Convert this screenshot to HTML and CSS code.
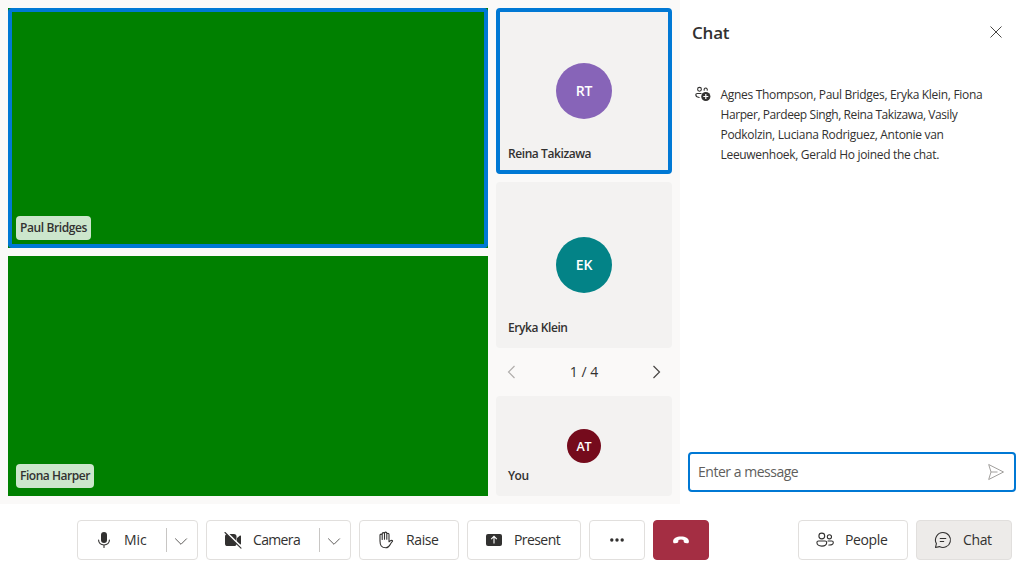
FILE: index.html
```html
<!DOCTYPE html>
<html lang="en">
<head>
<meta charset="utf-8">
<title>Call</title>
<link rel="stylesheet" href="styles.css">
</head>
<body>
<div class="app">
  <div class="main">
    <section class="stage">
      <div class="videos">
        <div class="video speaking"><span class="label">Paul Bridges</span></div>
        <div class="video"><span class="label label-wide">Fiona Harper</span></div>
      </div>
      <div class="side">
        <div class="tile speaking"><div class="avatar purple">RT</div><span class="name">Reina Takizawa</span></div>
        <div class="tile"><div class="avatar teal">EK</div><span class="name">Eryka Klein</span></div>
        <nav class="pager">
          <svg class="prev" width="16" height="16" viewBox="0 0 16 16"><path d="M10.5 2 4.5 8l6 6"/></svg>
          <span>1 / 4</span>
          <svg width="16" height="16" viewBox="0 0 16 16"><path d="m5.5 2 6 6-6 6"/></svg>
        </nav>
        <div class="tile you"><div class="avatar small">AT</div><span class="name">You</span></div>
      </div>
    </section>
    <aside class="chat">
      <header class="chat-head"><h2>Chat</h2>
        <svg class="close" width="16" height="16" viewBox="0 0 16 16"><path d="m2.5 2.5 11 11M13.5 2.5l-11 11"/></svg>
      </header>
      <div class="event">
        <svg width="16" height="16" viewBox="0 0 16 16"><g class="line"><circle cx="4.5" cy="3.3" r="1.9"/><path d="M9.2 4.2a1.6 1.6 0 1 1 3 0M6 7.5H2.3c-1 0-1.5.5-1.5 1.3 0 1.5 1.4 2.4 3.4 2.7"/></g><circle class="solid" cx="10.8" cy="10.5" r="4.6"/><path class="plus" d="M10.8 8v5M8.3 10.5h5"/></svg>
        <p>Agnes Thompson, Paul Bridges, Eryka Klein, Fiona<br><span class="tight">Harper, Pardeep Singh, Reina Takizawa, Vasily</span><br>Podkolzin, Luciana Rodriguez, Antonie van<br>Leeuwenhoek, Gerald Ho joined the chat.</p>
      </div>
      <div class="composer"><span>Enter a message</span>
        <svg width="18" height="18" viewBox="0 0 18 18"><path d="m1.7 1.5 14.8 7.5-14.8 7.5L4 9ZM4 9h6.5"/></svg>
      </div>
    </aside>
  </div>
  <footer class="bar">
    <div class="group">
      <div class="btn mic">
        <svg width="20" height="20" viewBox="0 0 20 20"><rect class="solid" x="7" y="2" width="6" height="11" rx="3"/><path class="line" d="M4.6 10c0 3.2 2.2 5 5.4 5s5.4-1.8 5.4-5M10 15v2.5"/></svg>
        <span>Mic</span><i class="split"></i>
        <svg class="chev" width="14" height="14" viewBox="0 0 14 14"><path d="m1.2 4.5 5.8 5.8 5.8-5.8"/></svg>
      </div>
      <div class="btn camera">
        <svg width="20" height="20" viewBox="0 0 20 20"><rect class="solid" x="2" y="4" width="11.5" height="12" rx="2.6"/><path class="solid" d="m14 8 3-2.4c.5-.4 1-.1 1 .5v7.8c0 .6-.5.9-1 .5L14 12Z"/><path class="gap" d="m3 2 15.5 15.3"/><path class="line" d="m2 2.5 16 15.7"/></svg>
        <span>Camera</span><i class="split"></i>
        <svg class="chev" width="14" height="14" viewBox="0 0 14 14"><path d="m1.2 4.5 5.8 5.8 5.8-5.8"/></svg>
      </div>
      <div class="btn raise">
        <svg width="20" height="20" viewBox="0 0 20 20"><path class="line" d="M4 11V5.2c0-1.5 2.2-1.5 2.2 0V9.5M6.2 5V3.7c0-1.5 2.3-1.5 2.3 0v5.5M8.5 4V3.2c0-1.5 2.3-1.5 2.3 0v6M10.8 4.4c0-1.5 2.2-1.5 2.2 0V11.8c1-1 2.4-1.7 3.2-1.3.7.4.3 1-.2 1.4-1.9 1.6-2.4 5.9-6.1 5.9C5.4 17.8 4 15.2 4 11"/></svg>
        <span>Raise</span>
      </div>
      <div class="btn present">
        <svg width="20" height="20" viewBox="0 0 20 20"><rect class="solid" x="2" y="4" width="16" height="12" rx="2"/><path class="arrow" d="M10 13.5v-7M7.2 9.2 10 6.4l2.8 2.8"/></svg>
        <span>Present</span>
      </div>
      <div class="btn more">
        <svg width="20" height="20" viewBox="0 0 20 20"><g class="solid"><circle cx="4.8" cy="10" r="1.7"/><circle cx="10" cy="10" r="1.7"/><circle cx="15.2" cy="10" r="1.7"/></g></svg>
      </div>
      <div class="btn leave">
        <svg width="20" height="20" viewBox="0 0 20 20"><path d="M10 6.4c4.6 0 7.8 1.9 7.9 4.6.1 1.8-.6 2.5-2 2.2l-1.8-.3c-.9-.2-1.3-.7-1.4-1.5l-.2-1.4c-1.5-.7-3.5-.7-5 0l-.2 1.4c-.1.8-.5 1.3-1.4 1.5l-1.8.3c-1.4.3-2.1-.4-2-2.2.1-2.7 3.3-4.6 7.9-4.6Z"/></svg>
      </div>
    </div>
    <div class="group">
      <div class="btn people">
        <svg width="20" height="20" viewBox="0 0 20 20"><g class="line"><circle cx="6.8" cy="6" r="2.9"/><circle cx="14.4" cy="6.8" r="2.1"/><path d="M3.5 11h6.6c1 0 1.6.6 1.6 1.5 0 2.2-2 3.6-4.9 3.6s-4.9-1.4-4.9-3.6c0-.9.6-1.5 1.6-1.5ZM13 11h3.8c1 0 1.5.6 1.5 1.4 0 1.8-1.7 2.9-4.5 2.6"/></g></svg>
        <span>People</span>
      </div>
      <div class="btn active">
        <svg width="20" height="20" viewBox="0 0 20 20"><path class="line" d="M10 2.5a7.5 7.5 0 1 1-3.6 14.1L2.5 17.5l.9-3.9A7.5 7.5 0 0 1 10 2.5ZM7.2 8.5h5.6M7.2 11.5h3.5"/></svg>
        <span>Chat</span>
      </div>
    </div>
  </footer>
</div>
</body>
</html>
```
FILE: styles.css
```css
* { box-sizing: border-box; }
body { margin: 0; font-family: "Segoe UI", "Open Sans", sans-serif; font-size: 14px; color: #323130; background: #fff; }
svg { display: block; flex: none; fill: none; stroke: #323130; }
.app { width: 1024px; height: 576px; display: flex; flex-direction: column; }
.main { height: 504px; display: flex; }
.stage { width: 680px; padding: 8px; display: flex; gap: 8px; background: #faf9f8; }
.videos { width: 480px; display: flex; flex-direction: column; gap: 8px; }
.video { position: relative; height: 240px; padding: 8px; display: flex; align-items: flex-end; background: #008000; }
.video.speaking::after { content: ""; position: absolute; inset: 0; border: 4px solid #0078d4; border-radius: 4px; }
.label { width: 75px; height: 24px; line-height: 24px; border-radius: 4px; text-align: center; background: rgba(255, 255, 255, .8); font-size: 12px; font-weight: 600; letter-spacing: -.38px; white-space: nowrap; }
.label-wide { width: 78px; letter-spacing: -.46px; }
.side { width: 176px; display: flex; flex-direction: column; }
.tile { height: 166px; padding: 55px 12px 0; border-radius: 4px; background: #f3f2f1; display: flex; flex-direction: column; }
.tile.speaking { border: 4px solid #0078d4; padding: 51px 8px 0; margin-bottom: 8px; }
.avatar { width: 56px; height: 56px; padding-bottom: 2px; border-radius: 50%; align-self: center; display: flex; align-items: center; justify-content: center; color: #fff; font-weight: 600; font-size: 14px; letter-spacing: -.1px; }
.purple { background: #8764b8; }
.teal { background: #038387; }
.small { width: 34px; height: 34px; padding: 0; font-size: 12.5px; background: #750b1c; }
.name { margin-top: 27px; line-height: 16px; font-size: 12px; font-weight: 600; letter-spacing: -.52px; }
.tile:not(.you) .name { letter-spacing: -.42px; }
.pager { height: 48px; padding: 0 8px; display: flex; align-items: center; justify-content: space-between; }
.pager span { padding-bottom: 2px; }
.pager svg { stroke: #484644; stroke-width: 1.2; }
.pager .prev { stroke: #b0aeac; }
.you { height: 100px; padding-top: 33px; }
.you .name { margin-top: 5px; }
.chat { width: 344px; display: flex; flex-direction: column; }
.chat-head { height: 64px; padding: 0 20px 0 12px; display: flex; align-items: center; justify-content: space-between; }
.close { stroke: #484644; }
h2 { margin: 0; font-size: 17px; font-weight: 600; letter-spacing: -.2px; }
.event { padding: 21px 0 0 15px; display: flex; gap: 9.5px; }
.event svg { margin-top: 1px; }
.event p { margin: 0; font-size: 12px; line-height: 20px; letter-spacing: -.31px; white-space: nowrap; }
.tight { letter-spacing: -.42px; }
.line { stroke: #323130; stroke-width: 1.1; stroke-linejoin: round; stroke-linecap: round; }
.solid { fill: #323130; stroke: none; }
.plus { stroke: #fff; stroke-width: 1.2; }
.composer { height: 40px; margin: auto 8px 12px; padding: 0 9px 0 8px; border: 2px solid #0078d4; border-radius: 4px; display: flex; align-items: center; justify-content: space-between; color: #605e5c; letter-spacing: -.48px; }
.composer span { padding-bottom: 2px; }
.composer svg { stroke: #a19f9d; stroke-linejoin: round; }
.bar { height: 72px; padding: 16px 12px 16px 77px; display: flex; justify-content: space-between; }
.group { display: flex; gap: 8px; }
.btn { height: 40px; border: 1px solid #e1dfdd; border-radius: 4px; display: flex; align-items: center; padding-left: 16px; gap: 10px; letter-spacing: -.38px; }
.btn span { padding-bottom: 2px; }
.mic { width: 121px; letter-spacing: -.1px; }
.camera { width: 145px; letter-spacing: -.65px; }
.raise { width: 100px; }
.present { width: 114px; letter-spacing: -.58px; }
.more, .leave { width: 56px; padding: 0; justify-content: center; }
.leave { background: #a42e43; border-color: #a42e43; }
.leave svg { fill: #fff; stroke: none; }
.people { width: 110px; }
.active { width: 96px; background: #edebe9; }
.split { width: 1px; height: 24px; background: #c8c6c4; margin-left: auto; margin-right: -3px; }
.chev { margin: 2px 9px 0 0; stroke: #605e5c; }
.gap { stroke: #fff; stroke-width: 2; }
.arrow { stroke: #fff; stroke-width: 1.1; }
```
